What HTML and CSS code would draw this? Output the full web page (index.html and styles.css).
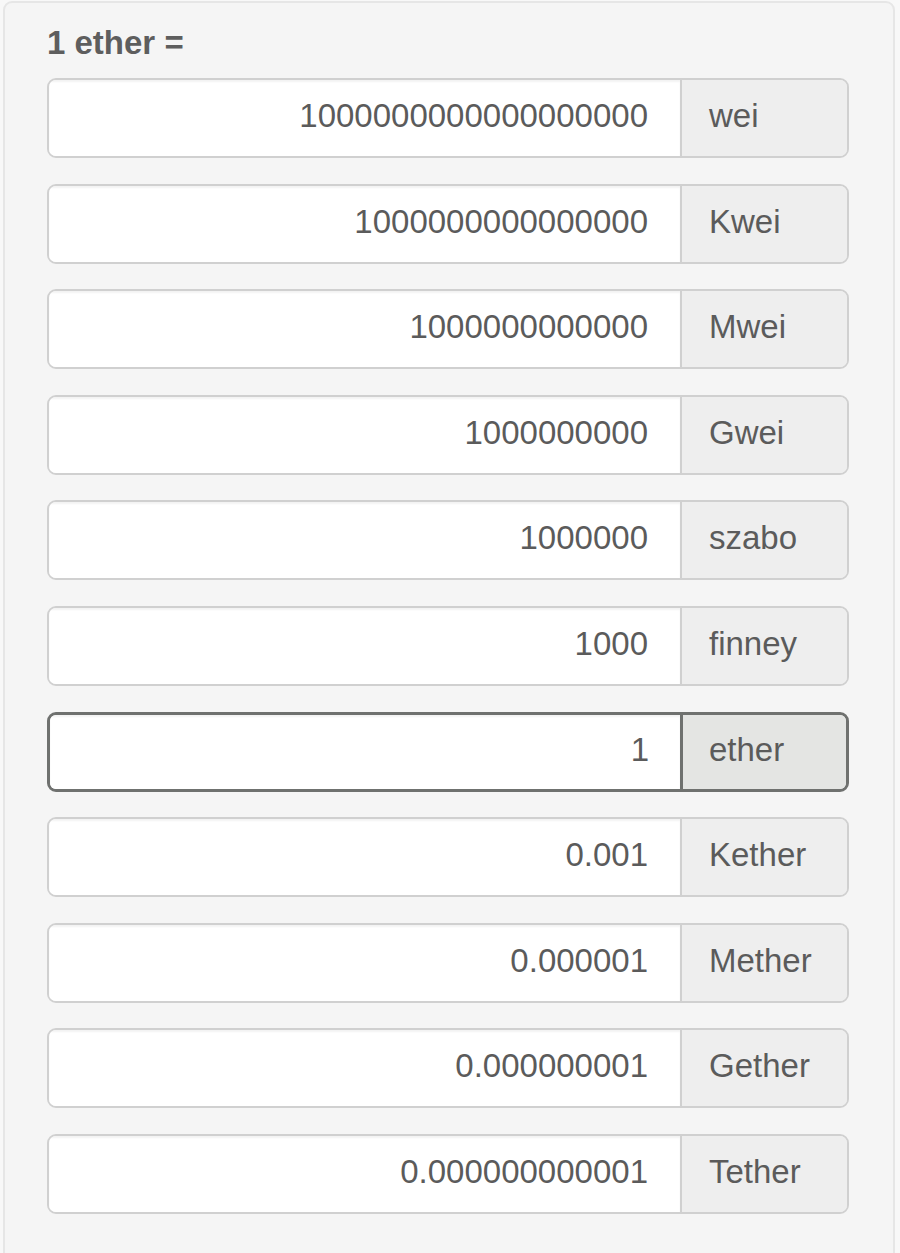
FILE: index.html
```html
<!DOCTYPE html>
<html>
<head>
<meta charset="utf-8">
<link rel="stylesheet" href="styles.css">
</head>
<body>
<div class="panel">
  <div class="title">1 ether =</div>
  <div class="rows">
    <div class="group"><div class="field">1000000000000000000</div><div class="unit">wei</div></div>
    <div class="group"><div class="field">1000000000000000</div><div class="unit">Kwei</div></div>
    <div class="group"><div class="field">1000000000000</div><div class="unit">Mwei</div></div>
    <div class="group"><div class="field">1000000000</div><div class="unit">Gwei</div></div>
    <div class="group"><div class="field">1000000</div><div class="unit">szabo</div></div>
    <div class="group"><div class="field">1000</div><div class="unit">finney</div></div>
    <div class="group active"><div class="field">1</div><div class="unit">ether</div></div>
    <div class="group"><div class="field">0.001</div><div class="unit">Kether</div></div>
    <div class="group"><div class="field">0.000001</div><div class="unit">Mether</div></div>
    <div class="group"><div class="field">0.000000001</div><div class="unit">Gether</div></div>
    <div class="group"><div class="field">0.000000000001</div><div class="unit">Tether</div></div>
  </div>
</div>
</body>
</html>
```

FILE: styles.css
```css
html, body {
  margin: 0;
  padding: 0;
  background: #f8f8f8;
}
body {
  font-family: "Liberation Sans", Arial, sans-serif;
  color: #555;
}
.panel {
  margin: 1px 5px 0 3px;
  height: 1280px;
  box-sizing: border-box;
  padding: 20.6px 44px 0 42px;
  background: #f5f5f5;
  border: 2px solid #e6e6e6;
  border-radius: 9px;
}
.title {
  font-size: 33px;
  line-height: 38px;
  font-weight: bold;
  color: #5e5e5e;
  margin-bottom: 16.4px;
}
.rows {
  display: flex;
  flex-direction: column;
  gap: 25.6px;
}
.group {
  display: flex;
  height: 80px;
  box-sizing: border-box;
  border: 2px solid #d0d0d0;
  border-radius: 9px;
  overflow: hidden;
  font-size: 33px;
  color: #5b5b5b;
}
.field {
  flex: 1;
  background: #fff;
  display: flex;
  align-items: center;
  justify-content: flex-end;
  padding: 0 32px 4px 0;
  box-shadow: inset 0 2px 2px rgba(0,0,0,0.05);
}
.unit {
  width: 167px;
  box-sizing: border-box;
  background: #eeeeee;
  border-left: 2px solid #d0d0d0;
  display: flex;
  align-items: center;
  padding: 0 0 4px 27px;
}
.group.active {
  border: 3px solid #6f716f;
}
.group.active .field {
  padding-right: 31px;
}
.group.active .unit {
  width: 166px;
  border-left: 3px solid #6f716f;
  background: #e4e5e3;
  padding-left: 26px;
}
```
